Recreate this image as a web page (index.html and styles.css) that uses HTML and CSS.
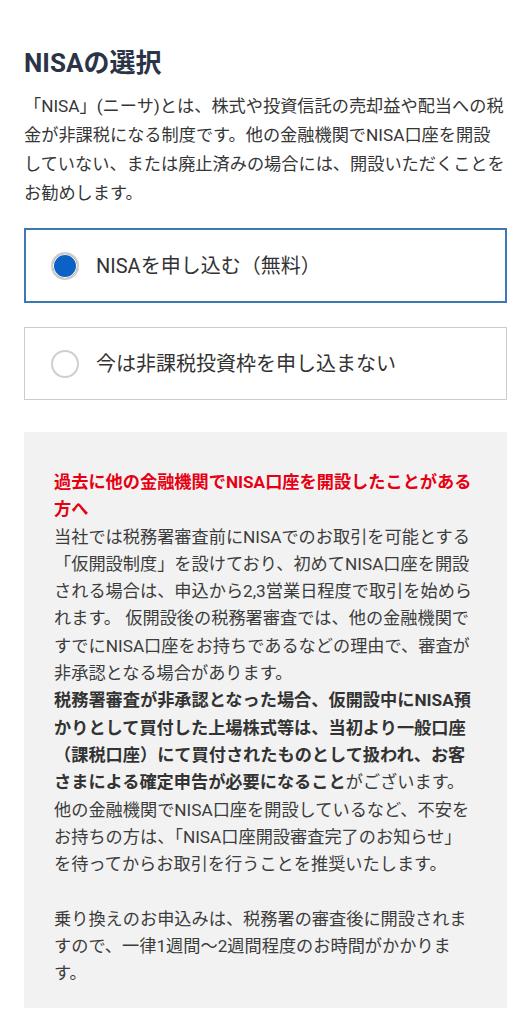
FILE: index.html
```html
<!DOCTYPE html>
<html lang="ja">
<head>
<meta charset="utf-8">
<title>NISAの選択</title>
<link rel="stylesheet" href="styles.css">
</head>
<body>
<main class="page">
  <h1 class="title">NISAの選択</h1>
  <p class="lead">「NISA」(ニーサ)とは、株式や投資信託の売却益や配当への税金が非課税になる制度です。他の金融機関でNISA口座を開設していない、または廃止済みの場合には、開設いただくことをお勧めします。</p>

  <div class="options">
    <label class="option option-selected">
      <span class="radio radio-on"></span>
      <span class="option-text">NISAを申し込む（無料）</span>
    </label>
    <label class="option">
      <span class="radio"></span>
      <span class="option-text">今は非課税投資枠を申し込まない</span>
    </label>
  </div>

  <section class="notice">
    <p class="notice-title">過去に他の金融機関でNISA口座を開設したことがある方へ</p>
    <p class="notice-text">当社では税務署審査前にNISAでのお取引を可能とする「仮開設制度」を設けており、初めてNISA口座を開設される場合は、申込から2,3営業日程度で取引を始められます。 仮開設後の税務署審査では、他の金融機関ですでにNISA口座をお持ちであるなどの理由で、審査が非承認となる場合があります。<br><strong>税務署審査が非承認となった場合、仮開設中にNISA預かりとして買付した上場株式等は、当初より一般口座（課税口座）にて買付されたものとして扱われ、お客さまによる確定申告が必要になること</strong>がございます。<br>他の金融機関でNISA口座を開設しているなど、不安をお持ちの方は、「NISA口座開設審査完了のお知らせ」を待ってからお取引を行うことを推奨いたします。</p>
    <p class="notice-text notice-gap">乗り換えのお申込みは、税務署の審査後に開設されますので、一律1週間～2週間程度のお時間がかかります。</p>
  </section>
</main>
</body>
</html>
```
FILE: styles.css
```css
html, body {
  margin: 0;
  padding: 0;
  background: #ffffff;
}
body {
  font-family: Roboto, "Noto Sans CJK JP", sans-serif;
  color: #333333;
}
.page {
  padding: 48px 24px 0;
}
.title {
  margin: 0;
  font-size: 26px;
  line-height: 30px;
  font-weight: 700;
  color: #2b3446;
}
.lead {
  margin: 14px 0 0;
  font-size: 17.2px;
  line-height: 29px;
  color: #363636;
}
.options {
  margin-top: 20px;
  display: flex;
  flex-direction: column;
  gap: 24px;
}
.option {
  display: flex;
  align-items: center;
  gap: 17px;
  height: 73px;
  box-sizing: border-box;
  padding-left: 26px;
  border: 1px solid #cccccc;
  background: #ffffff;
}
.option-selected {
  height: 75px;
  border: 2px solid #3b78b4;
  padding-left: 25px;
}
.radio {
  flex: none;
  width: 28px;
  height: 28px;
  box-sizing: border-box;
  border-radius: 50%;
  border: 2px solid #cfcfcf;
  background: #ffffff;
}
.radio-on {
  border: 2px solid #d6cdc3;
  background: #0b62c4;
  box-shadow: inset 0 0 0 1px #ffffff;
}
.option-text {
  font-size: 20px;
  line-height: 28px;
  color: #333333;
}
.notice {
  margin-top: 32px;
  background: #f2f2f2;
  padding: 37px 30px 20px;
}
.notice p {
  margin: 0;
  font-size: 17.2px;
  line-height: 27.3px;
}
.notice-title {
  color: #e60012;
  font-weight: 700;
}
.notice-text {
  color: #3c3c3c;
}
.notice-text strong {
  color: #333333;
  font-weight: 700;
}
.notice-gap {
  margin-top: 27.3px !important;
}
```
